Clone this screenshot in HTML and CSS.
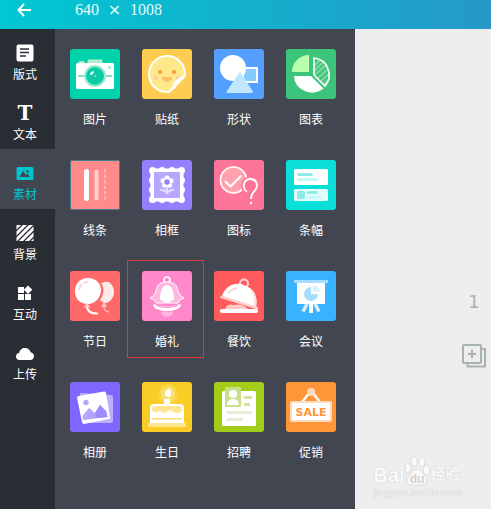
FILE: index.html
```html
<!DOCTYPE html>
<html lang="zh-CN">

<head>
    <meta charset="UTF-8" />
    <meta name="viewport" content="width=device-width, initial-scale=1.0" />
    <title>素材</title>
    <link rel="stylesheet" href="styles.css">
</head>

<body>
    <header class="topbar">
        <button type="button" class="back" aria-label="返回">
            <svg width="14" height="14" viewBox="0 0 14 14" fill="none" stroke="#fff" stroke-width="2">
                <path d="M7 1L1.5 7L7 13M1.5 7H14" />
            </svg>
        </button>
        <div class="size"><span>640</span><span class="times">×</span><span>1008</span></div>
    </header>
    <div class="main">
        <nav class="sidebar">
            <button type="button" class="nav-item">
                <svg width="18" height="18" viewBox="0 0 18 18">
                    <rect x="0.5" y="0.5" width="17" height="17" rx="2" fill="#fff" />
                    <path d="M4 5H13M4 8.5H13M4 12H10" stroke="#292d34" stroke-width="1.6" />
                </svg>
                <span>版式</span>
            </button>
            <button type="button" class="nav-item">
                <span class="letter">T</span>
                <span>文本</span>
            </button>
            <button type="button" class="nav-item active">
                <svg width="18" height="18" viewBox="0 0 18 18">
                    <rect x="0.5" y="3" width="17" height="13" rx="1.5" fill="#00c4cd" />
                    <path d="M3.5 13L7 7L10 11L11.5 9.500L14 13Z" fill="#414650" />
                    <circle cx="11.500" cy="7.500" r="1.200" fill="#414650" />
                </svg>
                <span>素材</span>
            </button>
            <button type="button" class="nav-item">
                <svg width="18" height="18" viewBox="0 0 18 18">
                    <rect x="0.500" y="1" width="17" height="16" fill="#fff" />
                    <path d="M0 7L7 0M0 13L13 0M1 18L18 1M7 18L18 7M13 18L18 13" stroke="#292d34" stroke-width="1.300" />
                </svg>
                <span>背景</span>
            </button>
            <button type="button" class="nav-item">
                <svg width="18" height="18" viewBox="0 0 18 18" fill="#fff">
                    <rect x="2" y="3" width="6" height="6" />
                    <rect x="2" y="10" width="6" height="6" />
                    <rect x="9" y="10" width="6" height="6" />
                    <path d="M12 1.500L16.300 5.800L12 10L7.800 5.800Z" />
                </svg>
                <span>互动</span>
            </button>
            <button type="button" class="nav-item">
                <svg width="20" height="18" viewBox="0 0 20 18" fill="#fff">
                    <path d="M4.500 16C2 16 1 14.300 1 12.500C1 10.500 2.300 9.200 4.200 9C4.500 6 7 4 10 4C13 4 15 5.800 15.500 8.200C17.800 8.600 19 10.300 19 12.200C19 14.500 17.500 16 15 16Z" />
                </svg>
                <span>上传</span>
            </button>
        </nav>

        <section class="panel">
            <button type="button" class="tile">
                <svg class="camera" viewBox="0 0 50 50">
                    <path d="M17 15L18 10.500H32L33 15ZM8 15L9 12H14L15 15Z" fill="#b5ead0" />
                    <rect x="6" y="14" width="38" height="26" rx="1.500" fill="#fff" />
                    <path d="M8 27H14M36 27H42" stroke="#89dfc2" stroke-width="2" />
                    <circle cx="25" cy="27" r="10" fill="#00d3ab" stroke="#a3e7cd" stroke-width="2" />
                    <circle cx="25" cy="27" r="7.500" fill="#0ccba6" />
                    <path d="M20.500 25.500L23.500 22.500" stroke="#fff" stroke-width="2" />
                    <circle cx="25" cy="27" r="1" fill="#89dfc2" />
                    <circle cx="39.500" cy="18.500" r="1.500" fill="#a3e7cd" />
                </svg>
                <span>图片</span>
            </button>
            <button type="button" class="tile">
                <svg class="sticker" viewBox="0 0 50 50">
                    <path d="M27 43A18 18 0 1 1 43 26Z" fill="#fee88a" stroke="#fff" stroke-width="2" stroke-linejoin="round" />
                    <circle cx="18" cy="23" r="2" fill="#ff9b35" />
                    <circle cx="32" cy="23" r="2" fill="#ff9b35" />
                    <circle cx="14" cy="29" r="2" fill="#ffc8a3" />
                    <circle cx="36" cy="29" r="2" fill="#ffc8a3" />
                    <path d="M20 28H30A5 5 0 0 1 20 28Z" fill="#ffbf68" />
                    <path d="M27 43Q32 39 32 35Q33 30 43 27Q41 31 36 35Q32 41 27 43Z" fill="#fff" stroke="#fff" />
                </svg>
                <span>贴纸</span>
            </button>
            <button type="button" class="tile">
                <svg class="shapes" viewBox="0 0 50 50">
                    <rect x="29" y="19" width="14" height="14" fill="#84cbff" stroke="#fff" stroke-width="2" />
                    <circle cx="19" cy="19" r="13" fill="#fff" />
                    <path d="M26 24L38 43H13.500Z" fill="#c1e7ff" stroke="#c1e7ff" stroke-width="2" stroke-linejoin="round" />
                </svg>
                <span>形状</span>
            </button>
            <button type="button" class="tile">
                <svg class="chart" viewBox="0 0 50 50">
                    <path d="M23 6V23H6A17 17 0 0 1 23 6Z" fill="#baffad" />
                    <path d="M8 27H25L37.500 39.500A18 17 0 0 1 8 27Z" fill="#fff" />
                    <path d="M28 9A17 17 0 0 1 39 37L28 26Z" fill="#3cc47a" />
                    <path d="M28 17L34 11M28 22L38 12M29 26L41 15M32 29L42 20M35 32L43 25M38 35L42 31" stroke="#80d89a" stroke-width="2" />
                    <path d="M28 9A17 17 0 0 1 39 37L28 26Z" fill="none" stroke="#fff" stroke-width="1.600" />
                </svg>
                <span>图表</span>
            </button>

            <button type="button" class="tile">
                <svg class="lines" viewBox="0 0 50 50">
                    <rect x="0.500" y="0.500" width="49" height="49" rx="2" fill="none" stroke="#477b88" />
                    <path d="M16.500 11.500V38.500" stroke="#fff" stroke-width="5" stroke-linecap="round" />
                    <path d="M26.500 11.500V38.500" stroke="#ffcfcf" stroke-width="4" stroke-linecap="round" />
                    <path d="M35 9V41" stroke="#ffc3c3" stroke-width="1.500" stroke-dasharray="3.500 2" />
                </svg>
                <span>线条</span>
            </button>
            <button type="button" class="tile">
                <svg class="frame" viewBox="0 0 50 50">
                    <rect x="10.500" y="10.500" width="29" height="29" fill="none" stroke="#fff" stroke-width="4" />
                    <path d="M10.500 10.500H39.500V39.500H10.500Z" fill="none" stroke="#fff" stroke-width="7" stroke-linecap="round" stroke-dasharray="0 9.666" />
                    <rect x="12" y="12" width="26" height="26" fill="#b9a6ff" />
                    <g fill="#fff">
                        <circle cx="25" cy="18" r="2.500" />
                        <circle cx="29" cy="20.800" r="2.500" />
                        <circle cx="27.500" cy="25.300" r="2.500" />
                        <circle cx="22.500" cy="25.300" r="2.500" />
                        <circle cx="21" cy="20.800" r="2.500" />
                    </g>
                    <circle cx="25" cy="22" r="2.700" fill="#9480ff" />
                    <path d="M25 27V34M18 30Q23 30 25 33Q27 30 32 30" fill="none" stroke="#e5deff" stroke-width="2" />
                </svg>
                <span>相框</span>
            </button>
            <button type="button" class="tile">
                <svg class="badge" viewBox="0 0 50 50">
                    <circle cx="19.500" cy="20" r="13" fill="#ffa2ad" stroke="#fff" stroke-width="1.700" />
                    <path d="M11 21L16.500 26.500L27.500 15.500" fill="none" stroke="#fff" stroke-width="2" />
                    <path class="mark-gap" d="M33 32C27 27 30 19 36.500 19C42 19 44 24 42.500 28C41 32 37 32 37 39" />
                    <path d="M33 32C27 27 30 19 36.500 19C42 19 44 24 42.500 28C41 32 37 32 37 39" fill="none" stroke="#fff" stroke-width="1.800" />
                    <circle cx="37" cy="43" r="1.200" fill="#fff" />
                </svg>
                <span>图标</span>
            </button>
            <button type="button" class="tile">
                <svg class="banner" viewBox="0 0 50 50">
                    <rect x="8" y="9" width="34" height="16" rx="1.500" fill="#fff" />
                    <rect x="8" y="29" width="34" height="12" rx="1.500" fill="#e6fcfc" />
                    <rect x="11" y="31" width="8" height="8" rx="1.500" fill="#8eebe5" />
                    <path d="M12.500 14.500H25.500M22.500 32.500H30.500" stroke="#8eebe5" stroke-width="3" stroke-linecap="round" />
                    <path d="M12.500 19.500H30.500M22.500 37.500H34.500" stroke="#c3faf8" stroke-width="3" stroke-linecap="round" />
                </svg>
                <span>条幅</span>
            </button>

            <button type="button" class="tile">
                <svg class="balloon" viewBox="0 0 50 50">
                    <path d="M35 11C40 10 44 15 44 21C44 27 40 32 34 32L30 29C34 24 35 16 31 12Z" fill="#ffeaea" />
                    <path d="M34 31L31 36H37Z" fill="#ffc7c7" />
                    <path d="M34 36Q34 40 39 41" fill="none" stroke="#ffb0b0" stroke-width="1.500" />
                    <path d="M18 7C26 7 31.500 13 31 20C30 28 24 33 18 33C10 33 5 28 5 20C5 13 10 7 18 7Z" fill="#fff" />
                    <path d="M9 19Q10 12 18 11" fill="none" stroke="#ffd2d2" stroke-width="2" stroke-dasharray="7 2 9" />
                    <path d="M17 32L13.500 36.500H20.500Z" fill="#ffc7c7" />
                    <path d="M17 36Q18 43 28 42.500" fill="none" stroke="#fff" stroke-width="2" />
                </svg>
                <span>节日</span>
            </button>
            <button type="button" class="tile selected">
                <svg class="bell" viewBox="0 0 50 50">
                    <path d="M19 41H31A6 5 0 0 1 19 41Z" fill="#ffb6df" />
                    <circle cx="25" cy="9" r="3" fill="none" stroke="#fff" stroke-width="1.600" />
                    <path d="M25 11C32 11 35 14 36 20Q37 25 42 27Q37 28 36 32H14Q13 28 8 27Q13 25 14 20C15 14 18 11 25 11Z" fill="#ffb6df" stroke="#fff" stroke-width="1" stroke-linejoin="round" />
                    <path d="M25 14C31 14 32 24 32 29Q29 29 28 31Q25 33 22 31Q21 29 18 29C18 24 19 14 25 14Z" fill="#fff" />
                    <path d="M12 33Q25 38 38 33Q40 35 36.500 37.500Q25 43 13.500 37.500Q10 35 12 33Z" fill="#fff" />
                    <path d="M14 34.500Q25 38.500 36 34.500" fill="none" stroke="#ff88ca" stroke-width="1" />
                </svg>
                <span>婚礼</span>
            </button>
            <button type="button" class="tile">
                <svg class="dish" viewBox="0 0 50 50">
                    <circle cx="30" cy="12.500" r="4" fill="none" stroke="#ffd7d7" stroke-width="2" />
                    <path d="M11 38Q13 32 20 34Q28 32 34 38Z" fill="#ffc8c8" />
                    <path d="M8 25C12 14 23 10 32 15C40 18 44 27 42 36Z" fill="#fff" />
                    <path d="M34 16C40 21 41 28 39 35L42 36C44 27 41 19 34 16Z" fill="#ffe0df" />
                    <path d="M7.500 26L43 37" stroke="#ffd1cf" stroke-width="2.400" stroke-linecap="round" />
                    <path d="M14 23Q17 18 23 17" fill="none" stroke="#ffd1cf" stroke-width="1.500" />
                    <rect x="6" y="38" width="38" height="4" rx="1.800" fill="#fff" />
                </svg>
                <span>餐饮</span>
            </button>
            <button type="button" class="tile">
                <svg class="meeting" viewBox="0 0 50 50">
                    <path d="M21 33L17 40.500M29 33L33 40.500" stroke="#d8efff" stroke-width="3.500" />
                    <path d="M25 33V42" stroke="#fff" stroke-width="4" />
                    <rect x="11" y="10" width="28" height="23" rx="1" fill="#fff" />
                    <rect x="8" y="9" width="34" height="3" fill="#a5dcff" />
                    <path d="M25 16V23H32A7 7 0 1 1 25 16Z" fill="#a5dcff" />
                    <path d="M27 14A7 7 0 0 1 34 21H27Z" fill="#d8f0ff" />
                </svg>
                <span>会议</span>
            </button>

            <button type="button" class="tile">
                <svg class="album" viewBox="0 0 50 50">
                    <path d="M10 11L41 13Q43 13 43 15V39Q43 41 41 41L14 41Z" fill="#bfb0ff" />
                    <path d="M8.500 14L34 9.500Q35.500 9 36 11L40 35Q40.500 37 39 37L14 42Q12.500 42 12 40L7 16Q7 14.500 8.500 14Z" fill="#fff" />
                    <path d="M13 38L12.500 34L19 26L25 31L30 23L36 29L37.500 35Z" fill="#b6a4ff" />
                    <path d="M25 31L30 23L36 29L37.500 35L26 36Z" fill="#a08aff" />
                    <circle cx="16" cy="20.500" r="2.700" fill="#b6a4ff" />
                </svg>
                <span>相册</span>
            </button>
            <button type="button" class="tile">
                <svg class="cake" viewBox="0 0 50 50">
                    <circle cx="26" cy="12" r="10" fill="#fad64b" />
                    <circle cx="26" cy="12" r="7" fill="#fbdf70" />
                    <path d="M28 6Q31 13 26.500 15.500Q22 14 23 10Q24 8.500 28 6Z" fill="#fff" />
                    <rect x="22" y="17" width="6" height="7" fill="#fff" />
                    <path d="M8 42V26Q8 22 12 22H38Q42 22 42 26V42Z" fill="#fff" />
                    <path d="M10 27Q10 24 13 24H37Q40 24 40 27Q40 31 35 31Q32 31 30 29Q27 27 25 30Q22 32 20 30Q18 28 16 30Q10 31 10 27Z" fill="#fde68f" />
                    <path d="M10 37H40" stroke="#fde68f" stroke-width="2" />
                    <rect x="6" y="41" width="38" height="4" rx="1" fill="#fde68f" />
                </svg>
                <span>生日</span>
            </button>
            <button type="button" class="tile">
                <svg class="resume" viewBox="0 0 50 50">
                    <rect x="8" y="9" width="34" height="35" rx="1.500" fill="#fff" />
                    <rect x="11" y="5" width="16" height="20" rx="1" fill="#c7df8b" />
                    <circle cx="19" cy="12" r="4" fill="#fff" />
                    <path d="M13 23Q13 17 19 17Q25 17 25 23Z" fill="#fff" />
                    <path d="M30 15.500H38M30 22.500H36" stroke="#d3e4a0" stroke-width="3" />
                    <path d="M13 30.500H38M13 37.500H29" stroke="#e8eed2" stroke-width="3" />
                </svg>
                <span>招聘</span>
            </button>
            <button type="button" class="tile">
                <svg class="sale" viewBox="0 0 50 50">
                    <path d="M16 20L25 9L34 20" fill="none" stroke="#fff" stroke-width="2.500" />
                    <circle cx="25" cy="10" r="4" fill="#ffdcc0" />
                    <rect x="5" y="20" width="40" height="19" rx="1" fill="#fff" stroke="#ffdcc0" stroke-width="2" />
                    <text x="25" y="34" text-anchor="middle">SALE</text>
                </svg>
                <span>促销</span>
            </button>
        </section>

        <main class="stage">
            <div class="pages">
                <span class="page-no">1</span>
                <button type="button" class="add-page" aria-label="添加页面">
                    <svg width="24" height="24" viewBox="0 0 24 24" fill="none" stroke="#a9b2b3" stroke-width="2">
                        <path d="M19 5H23V22.500H5.500V19" />
                        <rect x="1" y="1" width="18" height="18" rx="1" />
                        <path d="M10 6V14M6 10H14" />
                    </svg>
                </button>
            </div>
            <div class="watermark">
                <div class="brand">
                    <span class="latin">Bai</span>
                    <svg width="26" height="30" viewBox="0 0 26 30" fill="#fafafa" stroke="#dcdcdc">
                        <ellipse cx="4" cy="12" rx="3" ry="4.500" />
                        <ellipse cx="10" cy="5.500" rx="3" ry="4.500" />
                        <ellipse cx="18" cy="6" rx="3" ry="4.500" />
                        <ellipse cx="22.500" cy="14" rx="3" ry="4.500" />
                        <path d="M13 13C17 13 18 17 21 20C25 24 23 29 18 29H8C3 29 1 24 5 20C8 17 9 13 13 13Z" />
                        <text class="du" x="13" y="27" text-anchor="middle">du</text>
                    </svg>
                    <span class="cn">经验</span>
                </div>
                <div class="site">jingyan.baidu.com</div>
            </div>
        </main>
    </div>
</body>

</html>
```
FILE: styles.css
```css
* {
    box-sizing: border-box;
}

body {
    margin: 0;
    min-height: 100vh;
    display: flex;
    flex-direction: column;
    font-family: "Liberation Sans", "Noto Sans CJK SC", sans-serif;
    font-size: 12px;
    color: #fff;
}

button {
    padding: 0;
    border: none;
    background: none;
    color: inherit;
    font: inherit;
    cursor: pointer;
}

svg {
    display: block;
}

.topbar {
    display: flex;
    align-items: flex-start;
    height: 29px;
    background: linear-gradient(to right, #00c8d2, #2698c8);
}

.back {
    display: flex;
    justify-content: center;
    width: 55px;
    height: 29px;
    padding-top: 3px;
    padding-right: 8px;
}

.size {
    display: flex;
    padding-left: 20px;
    font-family: "Liberation Serif", serif;
    font-size: 16px;
    line-height: 20px;
    color: #e8fafb;
}

.times {
    width: 31px;
    text-align: center;
    font-family: "DejaVu Sans", sans-serif;
}

.main {
    flex: 1;
    display: flex;
}

.sidebar {
    width: 55px;
    background-color: #292d34;
}

.nav-item {
    display: flex;
    flex-direction: column;
    align-items: center;
    gap: 5px;
    width: 100%;
    height: 60px;
    padding-top: 15px;
    padding-right: 5px;
    line-height: 16px;
}

.nav-item.active {
    background-color: #414650;
    color: #00c4cd;
}

.letter {
    font-family: "DejaVu Serif", serif;
    font-weight: bold;
    font-size: 20px;
    line-height: 18px;
}

.panel {
    display: grid;
    grid-template-columns: repeat(4, 72px);
    grid-auto-rows: 81px;
    row-gap: 30px;
    align-content: start;
    width: 300px;
    padding: 20px 4px;
    background-color: #414650;
}

.tile {
    position: relative;
    display: flex;
    flex-direction: column;
    align-items: center;
    gap: 11px;
    line-height: 20px;
}

.tile svg {
    width: 50px;
    height: 50px;
    border-radius: 3px;
}

/* red frame round the chosen category */
.selected::after {
    content: "";
    position: absolute;
    top: -11px;
    right: -1px;
    bottom: -6px;
    left: -4px;
    border: 1px solid #e03636;
}

.camera {
    background-color: #00d3ab;
}

.sticker {
    background-color: #ffcc52;
}

.shapes {
    background-color: #549fff;
}

.chart {
    background-color: #3cc47a;
}

.lines {
    background-color: #ff8b8b;
}

.frame {
    background-color: #9480ff;
}

.badge {
    background-color: #ff7599;
}

.mark-gap {
    fill: #ff7599;
    stroke: #ff7599;
    stroke-width: 5px;
}

.banner {
    background-color: #0bdfda;
}

.balloon {
    background-color: #ff6969;
}

.bell {
    background-color: #ff88ca;
}

.dish {
    background-color: #ff5a5c;
}

.meeting {
    background-color: #39b3ff;
}

.album {
    background-color: #7f66ff;
}

.cake {
    background-color: #f9cd25;
}

.resume {
    background-color: #a3cd18;
}

.sale {
    background-color: #ff9537;
}

.sale text {
    font-family: "DejaVu Sans", sans-serif;
    font-weight: bold;
    font-size: 11px;
    fill: #ff9537;
}

.stage {
    position: relative;
    flex: 1;
    display: flex;
    justify-content: flex-end;
    background-color: #eee;
}

.pages {
    display: flex;
    flex-direction: column;
    align-items: center;
    gap: 31px;
    padding-top: 262px;
    padding-right: 5px;
}

.page-no {
    font-family: "DejaVu Sans", sans-serif;
    font-size: 18px;
    line-height: 22px;
    color: #a9b2b3;
}

.watermark {
    position: absolute;
    right: 29px;
    bottom: 11px;
    font-weight: bold;
    color: #fafafa;
    text-shadow: 0 0 1px #ccc, 0 0 1px #ccc;
}

.brand {
    display: flex;
    align-items: flex-end;
}

.latin {
    font-size: 20px;
    line-height: 22px;
}

.cn {
    font-size: 15px;
    line-height: 24px;
}

.du {
    font-size: 12px;
    fill: #d0d0d0;
    stroke: none;
    text-shadow: none;
}

.site {
    font-size: 11px;
    line-height: 12px;
    font-weight: normal;
    color: #f2f2f2;
}
```
